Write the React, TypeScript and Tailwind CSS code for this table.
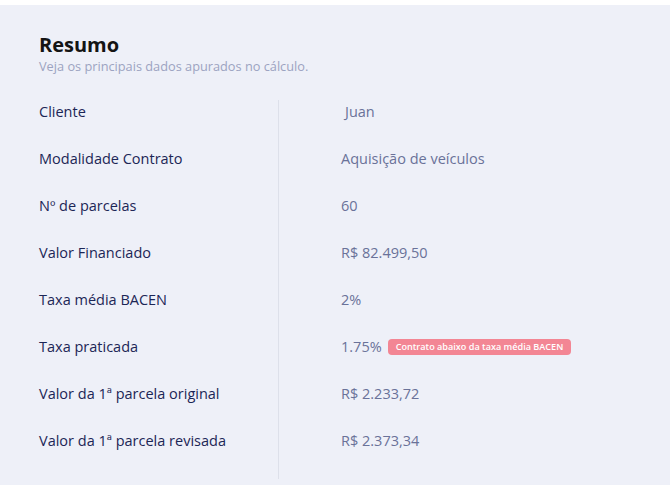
import React from "react";

const ROWS: { label: string; value: string; badge?: string }[] = [
  { label: "Cliente", value: "Juan" },
  { label: "Modalidade Contrato", value: "Aquisição de veículos" },
  { label: "Nº de parcelas", value: "60" },
  { label: "Valor Financiado", value: "R$ 82.499,50" },
  { label: "Taxa média BACEN", value: "2%" },
  { label: "Taxa praticada", value: "1.75%", badge: "Contrato abaixo da taxa média BACEN" },
  { label: "Valor da 1ª parcela original", value: "R$ 2.233,72" },
  { label: "Valor da 1ª parcela revisada", value: "R$ 2.373,34" },
];

export default function App() {
  return (
    <div className="w-[670px] h-[485px] bg-white pt-[5px] font-['Open_Sans',sans-serif]">
      <div className="h-[480px] bg-[#eef0f8] pl-[39px] pt-[27px]">
        {/* header */}
        <h2 className="text-[20px] leading-[26px] font-bold text-[#141414]">Resumo</h2>
        <p className="text-[12.75px] leading-[16px] text-[#9ca3c1]">
          Veja os principais dados apurados no cálculo.
        </p>

        {/* table */}
        <div className="flex mt-[14px]">
          <div className="w-[239px] pb-[15px]">
            {ROWS.map((r) => (
              <div key={r.label} className="h-[47px] flex items-center text-[14.5px] font-medium text-[#1c2656]">
                {r.label}
              </div>
            ))}
          </div>
          <div className="w-px bg-[#dde0ea] mt-[12px]" />
          <div className="pl-[62px] pb-[15px]">
            {ROWS.map((r, i) => (
              <div key={r.label} className="h-[47px] flex items-center text-[14.5px] text-[#6a7299]">
                <span className={i === 0 ? "pl-[4px]" : ""}>{r.value}</span>
                {r.badge && (
                  <span className="ml-[6px] bg-[#f38694] text-white text-[9.1px] font-semibold leading-[16px] px-[8px] rounded-[4px]">
                    {r.badge}
                  </span>
                )}
              </div>
            ))}
          </div>
        </div>
      </div>
    </div>
  );
}
